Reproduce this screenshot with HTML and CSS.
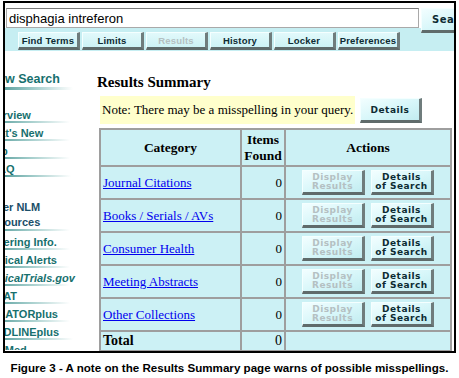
FILE: index.html
```html
<!DOCTYPE html>
<html lang="en">
<head>
  <meta charset="UTF-8">
  <meta name="viewport" content="width=device-width, initial-scale=1.0">
  <title>Results Summary</title>
  <link rel="stylesheet" href="styles.css">
</head>
<body>
  <div class="frame">
    <div class="search-row">
      <input class="query" type="text" value="disphagia intreferon">
      <button class="btn go">Search</button>
    </div>
    <div class="tabs">
      <button class="btn tab">Find Terms</button>
      <button class="btn tab">Limits</button>
      <button class="btn tab off">Results</button>
      <button class="btn tab">History</button>
      <button class="btn tab">Locker</button>
      <button class="btn tab">Preferences</button>
    </div>

    <div class="page">
      <ul class="side">
        <li class="big">New Search</li>
        <li class="first wide">Overview</li>
        <li class="wide">What's New</li>
        <li>Help</li>
        <li class="short">FAQ</li>
        <li class="group">Other NLM<br>Resources</li>
        <li>Ordering Info.</li>
        <li>Clinical Alerts</li>
        <li class="ital">ClinicalTrials.gov</li>
        <li class="wide">HSTAT</li>
        <li class="wide">LOCATORplus</li>
        <li class="short2">MEDLINEplus</li>
        <li>PubMed</li>
      </ul>

      <div class="content">
        <h2>Results Summary</h2>
        <div class="note-row">
          <div class="note">Note: There may be a misspelling in your query.</div>
          <button class="btn details">Details</button>
        </div>

        <table class="summary">
          <tr class="head">
            <th class="cat">Category</th>
            <th class="num">Items<br>Found</th>
            <th>Actions</th>
          </tr>
          <tr>
            <td><a href="#">Journal Citations</a></td>
            <td class="count">0</td>
            <td class="acts"><button class="btn act off">Display<br>Results</button><button class="btn act">Details<br>of Search</button></td>
          </tr>
          <tr>
            <td><a href="#">Books / Serials / AVs</a></td>
            <td class="count">0</td>
            <td class="acts"><button class="btn act off">Display<br>Results</button><button class="btn act">Details<br>of Search</button></td>
          </tr>
          <tr>
            <td><a href="#">Consumer Health</a></td>
            <td class="count">0</td>
            <td class="acts"><button class="btn act off">Display<br>Results</button><button class="btn act">Details<br>of Search</button></td>
          </tr>
          <tr>
            <td><a href="#">Meeting Abstracts</a></td>
            <td class="count">0</td>
            <td class="acts"><button class="btn act off">Display<br>Results</button><button class="btn act">Details<br>of Search</button></td>
          </tr>
          <tr>
            <td><a href="#">Other Collections</a></td>
            <td class="count">0</td>
            <td class="acts"><button class="btn act off">Display<br>Results</button><button class="btn act">Details<br>of Search</button></td>
          </tr>
          <tr class="total">
            <td><b>Total</b></td>
            <td class="count">0</td>
            <td></td>
          </tr>
        </table>
      </div>
    </div>
  </div>
  <p class="caption">Figure 3 - A note on the Results Summary page warns of possible misspellings.</p>
</body>
</html>
```

FILE: styles.css
```css
body {
  margin: 0;
  padding: 0;
  background: #fff;
  font-family: "Liberation Serif", serif;
}

.frame {
  box-sizing: border-box;
  width: 453px;
  height: 352px;
  margin: 1px 0 0 3px;
  border: 2px solid #000;
  overflow: hidden;
  background: #fff;
}

/* search line + tab strip */
.search-row {
  height: 25px;
  display: flex;
  align-items: flex-start;
  white-space: nowrap;
}

.query {
  flex: none;
  box-sizing: border-box;
  width: 413px;
  height: 20px;
  margin: 5px 0 0 1px;
  padding: 0 2px;
  border: 1px solid #a9a9a9;
  border-top-color: #7a7a7a;
  font: 13px "Liberation Sans", sans-serif;
  color: #000;
}

.btn {
  box-sizing: border-box;
  border: 0;
  border-top: 1px solid #f4ffff;
  border-left: 1px solid #f4ffff;
  border-right: 3px solid #6f7c7c;
  border-bottom: 3px solid #5f6b6b;
  padding: 0;
  background: linear-gradient(160deg, #f2feff 0%, #d6f6f9 55%, #c2ecf0 100%);
  color: #0d2b33;
  font: bold 9px "DejaVu Sans", sans-serif;
  letter-spacing: 0.5px;
  cursor: pointer;
}

.btn.off {
  color: #b4c0c2;
}

.go {
  flex: none;
  width: 62px;
  height: 25px;
  margin: 5px 0 0 2px;
  font-size: 10px;
  text-align: left;
  padding-left: 10px;
}

.tabs {
  height: 23px;
  background: #c6eef2;
  padding: 4px 0 0 13px;
  box-sizing: border-box;
  display: flex;
  gap: 2px;
}

.tab {
  width: 62px;
  height: 18px;
  font: bold 9.5px "Liberation Sans", sans-serif;
  letter-spacing: 0.2px;
  background: linear-gradient(#e2f9fb, #cdf2f5);
}

/* main area */
.page {
  display: flex;
  height: 299px;
}

.side {
  flex: none;
  width: 92px;
  margin: 0;
  padding: 0;
  list-style: none;
  overflow: hidden;
  font: bold 11px "Liberation Sans", sans-serif;
  color: #17706e;
  white-space: nowrap;
}

.side li {
  height: 18px;
  line-height: 14px;
  margin-left: -21px;
  background: linear-gradient(90deg, #3d8c8a, #9cc9c7 50%, rgba(255, 255, 255, 0)) no-repeat;
  background-size: 86px 2px;
  background-position: 0 13px;
}

.side li.big {
  font-size: 12.5px;
  margin-left: -16px;
  margin-top: 21px;
  height: 20px;
  line-height: 15px;
  background-position: 0 15px;
  background-size: 84px 3px;
}

.side li.wide {
  margin-left: -23px;
  background-size: 88px 2px;
}

.side li.short {
  margin-left: -13px;
  background-size: 79px 2px;
}

.side li.short2 {
  margin-left: -18px;
}

.side li.first {
  margin-top: 16px;
}

.side li.group {
  margin-top: 20px;
  height: 35px;
  line-height: 15px;
  color: #1b4f69;
  background-position: 0 29px;
}

.side li.ital {
  font-style: italic;
}

.content {
  flex: 1;
}

h2 {
  margin: 22px 0 0;
  font-size: 15px;
  line-height: 18px;
}

.note-row {
  display: flex;
  align-items: flex-start;
  gap: 5px;
  margin: 5px 0 0 3px;
}

.note {
  width: 255px;
  height: 28px;
  box-sizing: border-box;
  padding: 6px 0 0 2px;
  background: #ffffcc;
  font-size: 13px;
  white-space: nowrap;
}

.details {
  width: 62px;
  height: 25px;
  margin-top: 2px;
}

/* table */
.summary {
  width: 353px;
  margin: 4px 0 0 2px;
  border-collapse: collapse;
  table-layout: fixed;
  background: #ccf1f5;
  font-size: 13px;
}

.summary th,
.summary td {
  border: 2px solid #9e9e9e;
  padding: 0 2px;
  height: 31px;
}

.summary th {
  height: 35px;
  font-size: 13.5px;
  line-height: 16px;
}

.summary th.cat {
  width: 135px;
}

.summary th.num {
  width: 38px;
}

.summary a {
  color: #0000ee;
}

.count {
  text-align: right;
}

.acts {
  text-align: center;
  white-space: nowrap;
  font-size: 0;
}

.act {
  width: 63px;
  height: 25px;
  margin: 0 3px;
  line-height: 9px;
  vertical-align: middle;
}

.summary tr.total td {
  height: 18px;
  font-size: 14px;
}

.caption {
  margin: 8px 0 0;
  text-align: center;
  font: bold 11.6px "Liberation Sans", sans-serif;
  line-height: 13px;
  color: #000;
}
```
